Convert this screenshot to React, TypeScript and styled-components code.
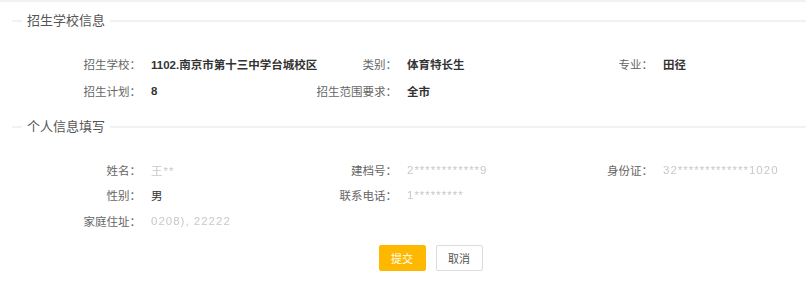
import styled, { createGlobalStyle } from "styled-components";

const Global = createGlobalStyle`
    html, body {
        margin: 0;
        padding: 0;
        background: #ffffff;
        font-family: "Liberation Sans", "Noto Sans CJK SC", sans-serif;
        color: #333;
    }
`;

const Page = styled.div`
    width: 806px;
    height: 288px;
    border-top: 2px solid #f2f2f2;
    box-sizing: border-box;
    overflow: hidden;
`;

const Fieldset = styled.fieldset<{ $top: number }>`
    margin: ${(p) => p.$top}px 0 0 12px;
    padding: 0;
    border: none;
    border-top: 2px solid #f2f2f2;
    min-width: 0;
`;

const Legend = styled.legend`
    margin-left: 10px;
    padding: 0 5px;
    font-size: 13px;
    line-height: 20px;
    color: #555;
`;

const Grid = styled.div<{ $rowHeight: number; $top: number }>`
    display: grid;
    grid-template-columns: repeat(3, 256px);
    grid-auto-rows: ${(p) => p.$rowHeight}px;
    padding: ${(p) => p.$top}px 0 0 8px;
`;

const Field = styled.div`
    display: flex;
    align-items: center;
    font-size: 11.5px;
    white-space: nowrap;
    min-width: 0;
`;

const Label = styled.span`
    flex: 0 0 121px;
    text-align: right;
    color: #666;
`;

const Value = styled.span<{ $bold?: boolean; $masked?: boolean }>`
    padding-left: 10px;
    color: ${(p) => (p.$masked ? "#c8c8c8" : "#333")};
    font-weight: ${(p) => (p.$bold ? "bold" : "normal")};
    letter-spacing: ${(p) => (p.$masked ? "1px" : "0")};
    filter: ${(p) => (p.$masked ? "blur(0.5px)" : "none")};
`;

const Actions = styled.div`
    display: flex;
    justify-content: center;
    gap: 10px;
    padding: 11px 0 0 55px;
`;

const Button = styled.button<{ $primary?: boolean }>`
    height: 26px;
    width: 47px;
    padding: 0;
    font-family: inherit;
    font-size: 11px;
    border-radius: 2px;
    cursor: pointer;
    border: 1px solid ${(p) => (p.$primary ? "#ffb800" : "#dcdcdc")};
    background: ${(p) => (p.$primary ? "#ffb800" : "#ffffff")};
    color: ${(p) => (p.$primary ? "#ffffff" : "#555")};
`;

type Item = { label: string; value: string; bold?: boolean; masked?: boolean };

const school: Item[] = [
    { label: "招生学校：", value: "1102.南京市第十三中学台城校区", bold: true },
    { label: "类别：", value: "体育特长生", bold: true },
    { label: "专业：", value: "田径", bold: true },
    { label: "招生计划：", value: "8", bold: true },
    { label: "招生范围要求：", value: "全市", bold: true },
];

const person: Item[] = [
    { label: "姓名：", value: "王**", masked: true },
    { label: "建档号：", value: "2************9", masked: true },
    { label: "身份证：", value: "32*************1020", masked: true },
    { label: "性别：", value: "男" },
    { label: "联系电话：", value: "1*********", masked: true },
    { label: "", value: "" },
    { label: "家庭住址：", value: "0208), 22222", masked: true },
];

const Fields = ({ items }: { items: Item[] }) => (
    <>
        {items.map((it, i) => (
            <Field key={i}>
                <Label>{it.label}</Label>
                <Value $bold={it.bold} $masked={it.masked}>
                    {it.value}
                </Value>
            </Field>
        ))}
    </>
);

const App = () => {
    return (
        <Page>
            <Global />
            <Fieldset $top={9}>
                <Legend>招生学校信息</Legend>
                <Grid $rowHeight={27} $top={19}>
                    <Fields items={school} />
                </Grid>
            </Fieldset>
            <Fieldset $top={13}>
                <Legend>个人信息填写</Legend>
                <Grid $rowHeight={25.5} $top={20}>
                    <Fields items={person} />
                </Grid>
            </Fieldset>
            <Actions>
                <Button $primary>提交</Button>
                <Button>取消</Button>
            </Actions>
        </Page>
    );
};

export default App;
